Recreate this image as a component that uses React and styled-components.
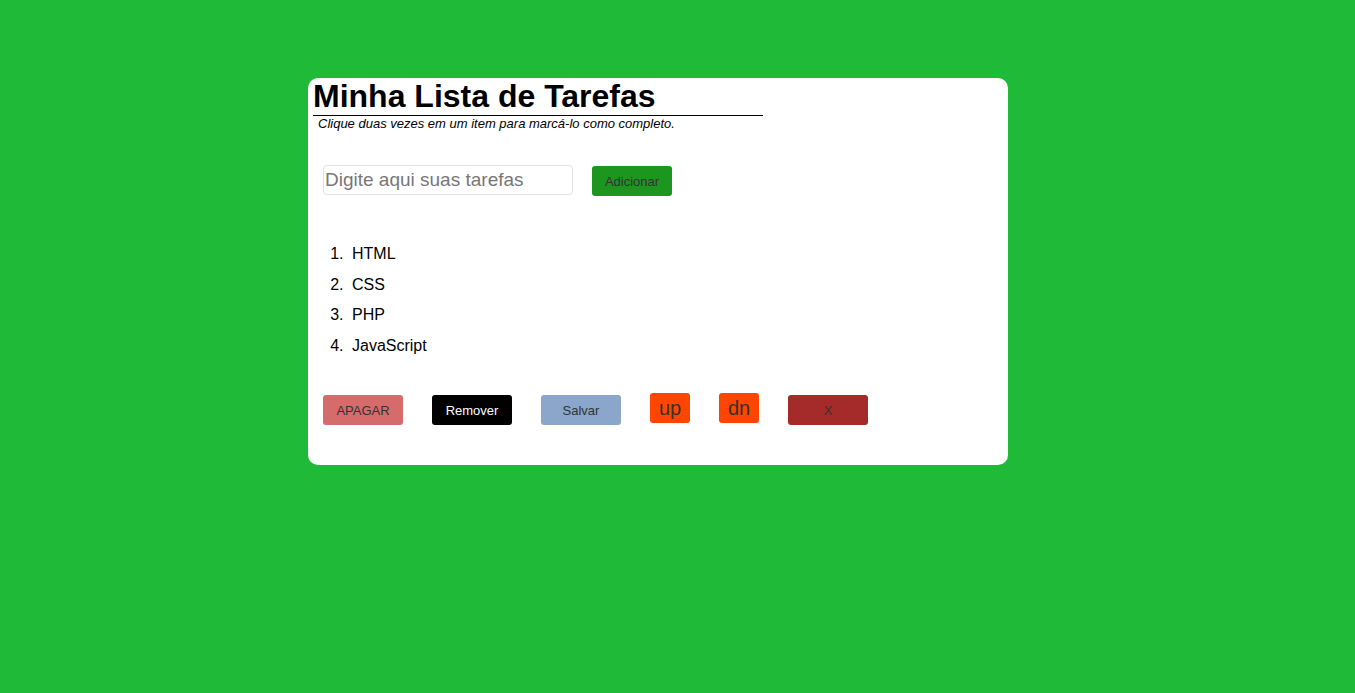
import React from "react";
import styled, { createGlobalStyle } from "styled-components";

const Global = createGlobalStyle`
  html, body { margin: 0; padding: 0; }
  body {
    background: #1fba37;
    font-family: "Liberation Sans", Arial, sans-serif;
    min-height: 693px;
  }
`;

const Page = styled.div`
  padding: 78px 0 0 308px;
`;

const Card = styled.div`
  width: 700px;
  box-sizing: border-box;
  background: #fff;
  border-radius: 10px;
  padding: 0 0 40px 5px;
`;

const Title = styled.h1`
  margin: 0;
  width: 450px;
  font-size: 32px;
  font-weight: bold;
  color: #000;
  border-bottom: 1px solid #000;
`;

const Hint = styled.p`
  margin: 0 0 0 5px;
  font-size: 13px;
  font-style: italic;
  color: #000;
`;

const Form = styled.div`
  display: flex;
  align-items: flex-start;
  gap: 19px;
  margin: 34px 0 0 10px;
`;

const Input = styled.input`
  width: 250px;
  height: 30px;
  box-sizing: border-box;
  border: 1px solid #e2e2e2;
  border-radius: 4px;
  padding: 0 0 0 1px;
  font-family: "Liberation Sans", Arial, sans-serif;
  font-size: 19px;
  outline: none;
  &::placeholder { color: #777; }
`;

const Btn = styled.button`
  width: ${p => p.$w || 80}px;
  height: 30px;
  margin-top: ${p => p.$mt || 0}px;
  box-sizing: border-box;
  border: none;
  border-radius: 3px;
  padding: ${p => (p.$fs ? 0 : "2px 0 0")};
  background: ${p => p.$bg};
  color: ${p => p.$fg || "#333"};
  font-family: "Liberation Sans", Arial, sans-serif;
  font-size: ${p => p.$fs || 13}px;
  line-height: 28px;
  cursor: pointer;
`;

const List = styled.ol`
  margin: 43px 0 0 0;
  padding: 0 0 0 35px;
  font-size: 16px;
  color: #000;
`;

const Item = styled.li`
  padding: 6px 0 6px 4px;
  line-height: 18.5px;
`;

const Actions = styled.div`
  display: flex;
  align-items: flex-start;
  gap: 29px;
  margin: 32px 0 0 10px;
`;

export default function App() {
  return (
    <>
      <Global />
      <Page>
        <Card>
          <Title>Minha Lista de Tarefas</Title>
          <Hint>Clique duas vezes em um item para marcá-lo como completo.</Hint>
          <Form>
            <Input placeholder="Digite aqui suas tarefas" />
            <Btn $bg="#1c961f" $mt={1}>Adicionar</Btn>
          </Form>
          <List>
            <Item>HTML</Item>
            <Item>CSS</Item>
            <Item>PHP</Item>
            <Item>JavaScript</Item>
          </List>
          <Actions>
            <Btn $bg="#d66b6b" $mt={2}>APAGAR</Btn>
            <Btn $bg="#000" $fg="#fff" $mt={2}>Remover</Btn>
            <Btn $bg="#8aa6ca" $mt={2}>Salvar</Btn>
            <Btn $bg="#ff4500" $w={40} $fs={20}>up</Btn>
            <Btn $bg="#ff4500" $w={40} $fs={20}>dn</Btn>
            <Btn $bg="#a52a2a" $mt={2}>X</Btn>
          </Actions>
        </Card>
      </Page>
    </>
  );
}
